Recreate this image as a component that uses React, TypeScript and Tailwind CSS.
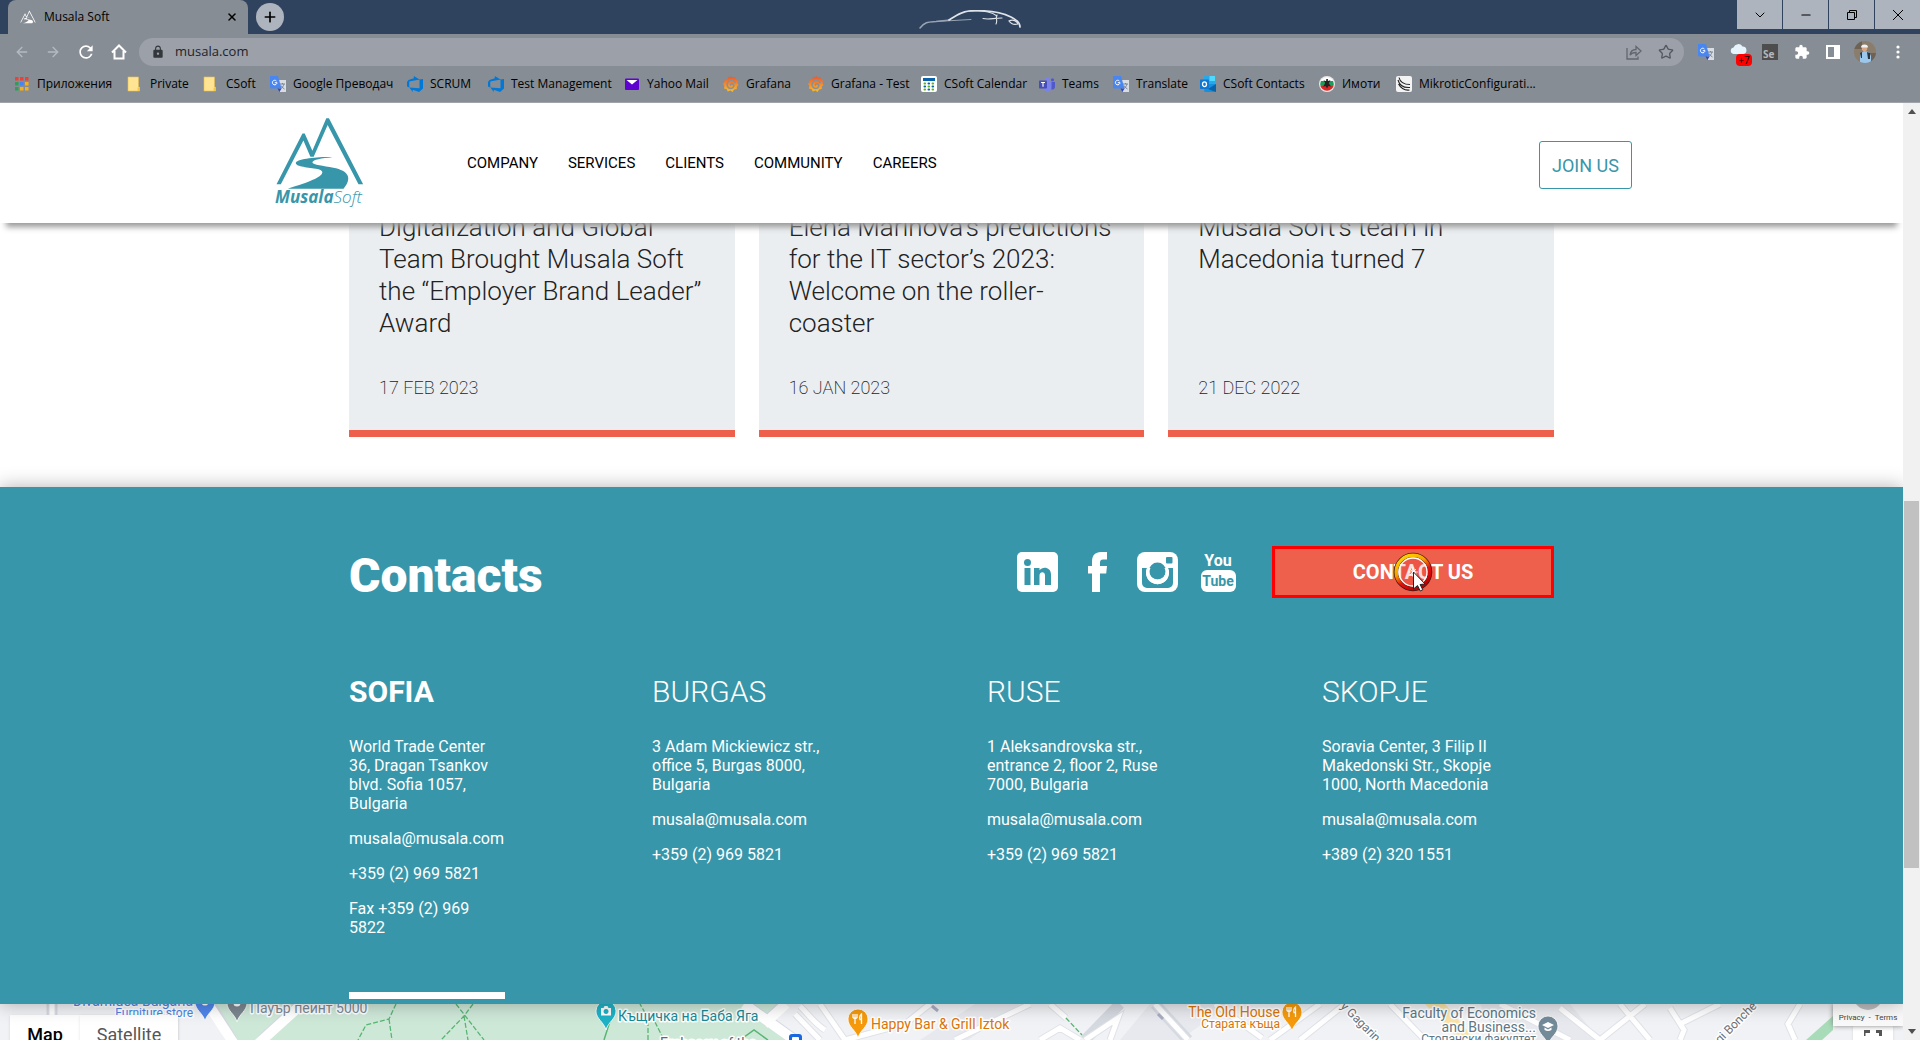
import React from "react";
import { MdRefresh, MdExtension, MdLock } from "react-icons/md";
import { ArrowLeft, ArrowRight, Plus, X, ChevronDown, Minus, Star } from "lucide-react";

/* ---------- small drawings ---------- */

function MountainMark({ className }: { className: string }) {
  return (
    <svg viewBox="30 20 270 217" className={className} fill="currentColor" aria-hidden="true">
      <path d="M34 223 L112 70 L119 70 L142 122 L184 24 L192 24 L295 223 L281 223 L188 44 L146 140 L136 140 L115 91 L47 223 Z" />
      <path d="M202 141 C160 139 92 147 92 159 C93 171 130 172 158 177 C186 184 170 201 130 215 C103 225 84 230 68 236 L236 236 C262 205 253 182 205 173 C176 167 143 164 142 157 C143 148 170 144 202 141 Z" />
    </svg>
  );
}

function AppsIcon() {
  const colors = ["#ee4035", "#ee4035", "#ee4035", "#2f9e58", "#4285f4", "#f9b015", "#2f9e58", "#f9b015", "#f9b015"];
  return (
    <svg viewBox="0 0 16 16" className="size-4 shrink-0" aria-hidden="true">
      {colors.map((c, i) => (
        <rect key={i} x={1 + (i % 3) * 5} y={1 + Math.floor(i / 3) * 5} width="3.500" height="3.500" fill={c} />
      ))}
    </svg>
  );
}

function FolderIcon() {
  return (
    <svg viewBox="0 0 16 16" className="size-4 shrink-0" aria-hidden="true">
      <path d="M1 1h10.5v10h1v4H1z" fill="#ffe493" stroke="#eac04a" strokeWidth=".6" />
      <path d="M10.500 11.500h2V15h-2z" fill="#f4c84a" />
    </svg>
  );
}

function TranslateIcon() {
  return (
    <svg viewBox="0 0 16 16" className="size-4 shrink-0" aria-hidden="true">
      <path d="M7 4h9v12H10z" fill="#d9dce1" />
      <path d="M10 8h5M12.500 7v1M14 8c-.5 2-2 4-3.500 5M11 9.500c.8 1.500 2 2.700 3.500 3.500" stroke="#6c7f95" fill="none" strokeWidth=".9" />
      <path d="M0 0h8l3.500 12.500H1a1 1 0 0 1-1-1z" fill="#4a86f0" />
      <path d="M7.500 12.500h4L9.500 16z" fill="#3346b8" />
      <path d="M6.400 5A2.300 2.300 0 1 0 7 6.700H4.800" stroke="#fff" fill="none" strokeWidth="1" />
    </svg>
  );
}

function DevOpsIcon() {
  return (
    <svg viewBox="0 0 16 16" className="size-4 shrink-0" aria-hidden="true">
      <path d="M16 3v9.500L12 16l-6.200-2.300V16l-3.500-4.600 10.200.8V3.500zM12.600 3.500L6.800 0v2.300L1.500 3.900 0 5.900v4.500l2.300 1V5.600z" fill="#0078d7" />
    </svg>
  );
}

function YahooMailIcon() {
  return (
    <svg viewBox="0 0 16 16" className="size-4 shrink-0" aria-hidden="true">
      <rect x="1" y="2.500" width="14" height="11.500" rx="1" fill="#5f01d1" />
      <path d="M2.500 4h11L8 8.500z" fill="#fff" />
    </svg>
  );
}

function GrafanaIcon() {
  return (
    <svg viewBox="0 0 16 16" className="size-4 shrink-0" aria-hidden="true">
      <defs>
        <linearGradient id="grafana" x1="0" y1="0" x2="0" y2="1">
          <stop offset="0" stopColor="#f0532b" />
          <stop offset="1" stopColor="#fbc02a" />
        </linearGradient>
      </defs>
      <path d="M8 0l1.700 1.600 2.600-.5.6 2.300 2.300 1.300-.7 2.300 1 2-1.600 1.600-.2 2.500-2.600.5L9.500 16l-2-1.400-2.800.9-1-2.300L1 12.500l.4-2.700L0 8l1.600-1.900L1.500 3.500l2.700-.4L5.500.8l2 .5z" fill="url(#grafana)" />
      <path d="M12.500 7.300C11.500 4.200 7.500 3.400 5.200 5.700 3 8.200 4.300 12.300 8 12.400c3 0 3.700-3.800 1.300-4.600-1.500-.4-2.300 1-1.500 1.800" fill="none" stroke="#8a9098" strokeWidth="1.500" />
    </svg>
  );
}

function CalendarIcon() {
  return (
    <svg viewBox="0 0 16 16" className="size-4 shrink-0" aria-hidden="true">
      <rect width="16" height="16" rx="2" fill="#fff" />
      <rect x="2" y="2" width="12" height="3" fill="#0b62a8" />
      {[0, 1, 2].map((r) =>
        [0, 1, 2].map((c) => (
          <rect key={`${r}${c}`} x={2.500 + c * 4} y={6.500 + r * 3} width="2.600" height="2" rx="1" fill={(r + c) % 2 ? "#0b62a8" : "#5cb51a"} />
        )),
      )}
    </svg>
  );
}

function TeamsIcon() {
  return (
    <svg viewBox="0 0 16 16" className="size-4 shrink-0" aria-hidden="true">
      <circle cx="9" cy="3" r="2.300" fill="#7b83eb" />
      <circle cx="13.500" cy="3.800" r="1.600" fill="#5059c9" />
      <path d="M11 6h5v5a2.500 2.500 0 0 1-4 2z" fill="#5059c9" />
      <path d="M5 6h7.500v5.500a4 4 0 0 1-7.500 2z" fill="#7b83eb" />
      <rect y="4.500" width="8" height="8" rx=".8" fill="#464eb8" />
      <path d="M2 6.500h4M4 6.500v4.300" stroke="#fff" strokeWidth="1.100" />
    </svg>
  );
}

function OutlookIcon() {
  return (
    <svg viewBox="0 0 16 16" className="size-4 shrink-0" aria-hidden="true">
      <rect x="4" y="0" width="11" height="9" fill="#28a8ea" />
      <rect x="9.500" y="0" width="5.500" height="5" fill="#50d9ff" />
      <path d="M3.500 8L16 8v7a1 1 0 0 1-1 1H4.500z" fill="#1490df" />
      <path d="M16 8l-8 5 8 3z" fill="#0a63a8" />
      <rect y="3.500" width="9" height="9.500" rx=".8" fill="#0f78d4" />
      <ellipse cx="4.500" cy="8.200" rx="2" ry="2.400" fill="none" stroke="#fff" strokeWidth="1.300" />
    </svg>
  );
}

function EstateIcon() {
  return (
    <svg viewBox="0 0 16 16" className="size-4 shrink-0" aria-hidden="true">
      <clipPath id="disc"><circle cx="8" cy="8" r="6.800" /></clipPath>
      <circle cx="8" cy="8" r="8" fill="#e9e9e9" />
      <g clipPath="url(#disc)">
        <rect width="16" height="6" fill="#fff" />
        <rect y="5" width="16" height="5" fill="#1c9c5b" />
        <rect y="10" width="16" height="6" fill="#dd2525" />
      </g>
      <path d="M7.300 3h1.600v2l2.600-.8-1.700 3 2.200 3.300-2.600-.5L8 12.500 6.600 10l-2.500.7L6.200 7 4.500 4.200l2.600 1z" fill="#222" />
    </svg>
  );
}

function MikrotikIcon() {
  return (
    <svg viewBox="0 0 16 16" className="size-4 shrink-0" aria-hidden="true">
      <rect width="16" height="16" rx="2" fill="#f3f3f3" />
      <path d="M3 1.500C4 6 8 8.500 14 8.500M2 4C3.500 9.500 8 12 14 11.500M2.500 8C5 12.500 9 14.500 13.500 14" fill="none" stroke="#222" strokeWidth="1.100" />
    </svg>
  );
}

function CarSketch() {
  return (
    <svg viewBox="0 0 104 20" className="h-5 w-[104px]" fill="none" stroke="#dfe4ea" strokeLinecap="round" aria-hidden="true">
      <path d="M1 18C6 11 11 12 17 11.500L31 10" strokeWidth="1.500" stroke="#98a3b3" />
      <path d="M17 11.500L52 9.500" strokeWidth="1" stroke="#98a3b3" />
      <path d="M30 10C38 5 43 1.500 50 1C66 0 82 2 92 7C99 10.500 101 13 101 17" strokeWidth="1.700" />
      <path d="M50 1C66 0 74 3 78 6M64 8.500C70 10 74 8 83 8M78 5C76 8 79 10 77 14" strokeWidth="1.100" />
      <path d="M90 11C94 9 98 11 99 14C95 15 92 14 90 11Z" strokeWidth="1.200" />
    </svg>
  );
}

/* ---------- browser chrome ---------- */

const bookmarks: { label: string; icon: () => React.JSX.Element }[] = [
  { label: "Приложения", icon: AppsIcon },
  { label: "Private", icon: FolderIcon },
  { label: "CSoft", icon: FolderIcon },
  { label: "Google Преводач", icon: TranslateIcon },
  { label: "SCRUM", icon: DevOpsIcon },
  { label: "Test Management", icon: DevOpsIcon },
  { label: "Yahoo Mail", icon: YahooMailIcon },
  { label: "Grafana", icon: GrafanaIcon },
  { label: "Grafana - Test", icon: GrafanaIcon },
  { label: "CSoft Calendar", icon: CalendarIcon },
  { label: "Teams", icon: TeamsIcon },
  { label: "Translate", icon: TranslateIcon },
  { label: "CSoft Contacts", icon: OutlookIcon },
  { label: "Имоти", icon: EstateIcon },
  { label: "MikroticConfigurati...", icon: MikrotikIcon },
];

function TabStrip() {
  return (
    <div className="flex h-[34px] items-stretch bg-[#2f435e]">
      <div className="ml-2 flex w-60 items-center rounded-t-lg bg-[#868d95] pr-2.5 pl-3">
        <MountainMark className="h-3.5 w-4 text-white" />
        <span className="ml-2 flex-1 text-[12px] text-black">Musala Soft</span>
        <button aria-label="Close tab"><X className="size-3 text-black" strokeWidth={3} /></button>
      </div>
      <button aria-label="New tab" className="ml-2 flex size-7 items-center justify-center self-center rounded-full bg-[#adb4be]">
        <Plus className="size-4 text-black" strokeWidth={2.500} />
      </button>
      <div className="flex flex-1 justify-center pt-2.5 pr-[78px]"><CarSketch /></div>
      <div className="ml-auto grid h-[29px] grid-cols-4 gap-px pl-px text-black">
        <button aria-label="Search tabs" className="flex w-[45px] items-center justify-center bg-[#adb4be]"><ChevronDown className="size-4" strokeWidth={1.500} /></button>
        <button aria-label="Minimise" className="flex w-[45px] items-center justify-center bg-[#adb4be]"><Minus className="size-3.5" strokeWidth={2} /></button>
        <button aria-label="Restore" className="flex w-[45px] items-center justify-center bg-[#adb4be]">
          <svg viewBox="0 0 10 10" className="size-2.5" fill="none" stroke="currentColor"><path d="M.5 2.500h7v7h-7zM2.500 2.500v-2h7v7h-2" /></svg>
        </button>
        <button aria-label="Close" className="flex w-[45px] items-center justify-center bg-[#adb4be]">
          <svg viewBox="0 0 10 10" className="size-2.5" fill="none" stroke="currentColor"><path d="M0 0l10 10M10 0L0 10" /></svg>
        </button>
      </div>
    </div>
  );
}

function Toolbar() {
  return (
    <div className="flex h-9 items-center bg-[#868d95] pl-3.5">
      <div className="flex items-center gap-[15px] text-white">
        <button aria-label="Back"><ArrowLeft className="size-4 text-[#b5bac0]" /></button>
        <button aria-label="Forward"><ArrowRight className="size-4 text-[#b5bac0]" /></button>
        <button aria-label="Reload"><MdRefresh className="size-5" /></button>
        <button aria-label="Home">
          <svg viewBox="0 0 16 16" className="size-4" fill="none" stroke="currentColor" strokeWidth="2"><path d="M1 8.500L8 1.500l7 7M3.500 7v7.500h9V7" /></svg>
        </button>
      </div>
      <div className="ml-3 flex h-7 flex-1 items-center rounded-full bg-[#9ca0a9] pr-2.5 pl-3">
        <MdLock className="size-3.5 text-[#33373c]" />
        <input aria-label="Address" defaultValue="musala.com" className="ml-2.5 min-w-0 flex-1 bg-transparent text-[13px] text-[#202428] outline-none" />
        <button aria-label="Share">
          <svg viewBox="0 0 16 16" className="size-4" fill="none" stroke="#62666c" strokeWidth="1.300"><path d="M1 4v11h11v-2.500M4 11c.5-3.500 2.500-5.500 6-5.500V2.500L15 7l-5 4.500V8.500C7 8.500 5.500 9 4 11z" /></svg>
        </button>
        <button aria-label="Bookmark" className="ml-4"><Star className="size-4 text-[#55595f]" strokeWidth={2} /></button>
      </div>
      <div className="flex w-[236px] shrink-0 items-center pl-3.5">
        <button aria-label="Translate"><TranslateIcon /></button>
        <button aria-label="Weather" className="relative ml-4">
          <svg viewBox="0 0 20 16" className="h-4 w-5"><path d="M3.500 10a3.300 3.300 0 0 1 0-6.500 5 5 0 0 1 9-1 3.800 3.800 0 0 1 1 7.500z" fill="#e6f4fc" /></svg>
          <span className="absolute top-2.5 left-1.5 h-3 w-4 rounded-sm bg-[#ff0000] text-[10px] leading-3 text-black">+7</span>
        </button>
        <button aria-label="Selenium" className="ml-3 flex size-4 items-end bg-[#4d4d4d] pl-px text-[10px] leading-3 font-bold text-[#b4b8bc]">Se</button>
        <button aria-label="Extensions" className="ml-4"><MdExtension className="size-4 text-white" /></button>
        <button aria-label="Side panel" className="ml-4">
          <svg viewBox="0 0 14 14" className="size-3.5"><path d="M0 0h14v14H0zM2 2v10h6V2z" fill="#fff" fillRule="evenodd" /></svg>
        </button>
        <button aria-label="Profile" className="ml-3.5">
          <svg viewBox="0 0 22 22" className="size-[22px]">
            <clipPath id="face"><circle cx="11" cy="11" r="11" /></clipPath>
            <g clipPath="url(#face)">
              <rect width="22" height="22" fill="#8b7d6b" />
              <path d="M0 0h8v8H0zM15 12h7v10h-7z" fill="#6d6254" />
              <path d="M6 22V13l4-3 5 1 2 4v7z" fill="#9bc7ec" />
              <path d="M13 11l3 1v6h-2zM6 12l2-1v6H7z" fill="#2c3440" />
              <circle cx="10.500" cy="7.500" r="2.700" fill="#d9a585" />
              <path d="M7 6.500a3.500 3 0 0 1 7 0z" fill="#f0f3f5" />
            </g>
          </svg>
        </button>
        <button aria-label="Menu" className="ml-5">
          <svg viewBox="0 0 4 14" className="h-3.5 w-1" fill="#fff"><circle cx="2" cy="2" r="1.600" /><circle cx="2" cy="7" r="1.600" /><circle cx="2" cy="12" r="1.600" /></svg>
        </button>
      </div>
    </div>
  );
}

function BookmarksBar() {
  return (
    <nav aria-label="Bookmarks" className="grid h-[33px] grid-cols-[113px_76px_67px_137px_81px_136px_99px_85px_113px_118px_74px_87px_119px_77px_auto] items-center border-b border-[#a0a4aa] bg-[#868d95] pb-1 pl-3.5 text-[12px] text-black">
      {bookmarks.map(({ label, icon: Icon }) => (
        <a key={label} href="#" className="flex items-center gap-[7px] whitespace-nowrap">
          <Icon />
          {label}
        </a>
      ))}
    </nav>
  );
}

/* ---------- page ---------- */

function SiteHeader() {
  return (
    <header className="relative z-10 h-[120px] shrink-0 bg-white shadow-[0_10px_6px_-6px_#999]">
      <div className="mx-auto flex h-full w-[1361px] max-w-full items-center pl-1">
        <a href="#" className="flex flex-col pb-1 text-[#3896aa]" aria-label="MusalaSoft">
          <MountainMark className="h-[72px] w-[90px]" />
          <span className="font-['Open_Sans'] text-[17px] leading-4 italic"><b>Musala</b><span className="font-light">Soft</span></span>
        </a>
        <nav aria-label="Main" className="ml-[102px] flex gap-[30px] text-[15px] text-black">
          <a href="#">COMPANY</a>
          <a href="#">SERVICES</a>
          <a href="#">CLIENTS</a>
          <a href="#">COMMUNITY</a>
          <a href="#">CAREERS</a>
        </nav>
        <button className="mt-1 ml-auto h-12 w-[93px] rounded-[3px] border border-[#3896aa] text-[18px] text-[#3896aa]">JOIN US</button>
      </div>
    </header>
  );
}

const news = [
  { lines: ["Digitalization and Global", "Team Brought Musala Soft", "the “Employer Brand Leader”", "Award"], date: "17 FEB 2023" },
  { lines: ["Elena Marinova’s predictions", "for the IT sector’s 2023:", "Welcome on the roller-", "coaster"], date: "16 JAN 2023" },
  { lines: ["Musala Soft’s team in", "Macedonia turned 7"], date: "21 DEC 2022" },
];

function News() {
  return (
    <section className="shrink-0 bg-white pb-[50px]">
      <div className="mx-auto grid w-[1205px] max-w-full grid-cols-3 gap-6">
        {news.map((n) => (
          <article key={n.date} className="border-b-[7px] border-[#ee5f4c] bg-[#ebeef1] px-[30px] pb-[30px]">
            <h3 className="-mt-3 min-h-32 text-[26px] leading-8 font-light whitespace-nowrap text-[#222]">
              {n.lines.map((l) => (
                <span key={l} className="block">{l}</span>
              ))}
            </h3>
            <p className="mt-[37px] text-[18px] leading-6 font-extralight text-[#222]">{n.date}</p>
          </article>
        ))}
      </div>
    </section>
  );
}

function Socials() {
  return (
    <div className="flex items-center gap-[18px] text-white">
      <a href="#" aria-label="LinkedIn">
        <svg viewBox="0 0 42 42" className="size-[42px]">
          <rect y="1" width="41" height="40" rx="5" fill="currentColor" />
          <g fill="#3896aa">
            <circle cx="10.500" cy="11.500" r="3.500" />
            <rect x="7.500" y="17" width="6" height="17" />
            <path d="M17 17h5.500v2.300c3-4.300 11.500-3.500 11.500 4.200V34h-6v-9.500c0-4.500-5.500-4-5.500 0V34H17z" />
          </g>
        </svg>
      </a>
      <a href="#" aria-label="Facebook">
        <svg viewBox="0 0 42 42" className="size-[42px]">
          <path d="M30 1v7.500h-4c-2 0-3 1-3 3V15h7l-.8 7.500H23V41h-8V22.500h-4V15h4v-4.500C15 4.500 18 1 24 1z" fill="currentColor" />
        </svg>
      </a>
      <a href="#" aria-label="Instagram">
        <svg viewBox="0 0 42 42" className="size-[42px]">
          <rect y="1" width="41" height="40" rx="8" fill="currentColor" />
          <rect x="29" y="6" width="6.500" height="6.500" rx="1" fill="#3896aa" />
          <path d="M5 17h5a11.500 11.500 0 1 0 21 0h5v15a5 5 0 0 1-5 5H10a5 5 0 0 1-5-5z" fill="#3896aa" />
          <circle cx="20.500" cy="20" r="8.500" fill="#3896aa" />
          <path d="M10 17a11.500 11.500 0 1 0 21 0l-3.500 0a8 8 0 1 1-14 0z" fill="currentColor" />
        </svg>
      </a>
      <a href="#" aria-label="YouTube" className="flex w-[42px] flex-col items-center font-bold">
        <span className="text-[16px] leading-[18px]">You</span>
        <span className="w-[35px] rounded-md bg-white text-center text-[14px] leading-[22px] text-[#3896aa]">Tube</span>
      </a>
    </div>
  );
}

function ClickMarker() {
  return (
    <svg viewBox="0 0 40 46" className="pointer-events-none absolute top-1/2 left-1/2 -mt-5 h-[46px] w-10 -translate-x-1/2" aria-hidden="true">
      <defs>
        <linearGradient id="ring" x1="0" y1="0" x2=".6" y2="1">
          <stop offset="0" stopColor="#ffe100" />
          <stop offset=".45" stopColor="#f8a000" />
          <stop offset=".7" stopColor="#e01010" />
          <stop offset="1" stopColor="#c00000" />
        </linearGradient>
      </defs>
      <circle cx="20" cy="20" r="17" fill="none" stroke="#3a1a10" strokeWidth="4.500" />
      <circle cx="20" cy="20" r="16.800" fill="none" stroke="url(#ring)" strokeWidth="3.500" />
      <circle cx="20" cy="20" r="14" fill="#e82020" fillOpacity=".15" stroke="#fff" strokeWidth="1.300" />
      <path d="M20 15v10M15 20h10M17 17l6 6M23 17l-6 6" stroke="#fff" strokeWidth=".8" />
      <path d="M20.500 20v17l4-3.500 2.700 5.500 2.600-1.300-2.700-5.200 5-.5z" fill="#fff" stroke="#222" strokeWidth="1" />
    </svg>
  );
}

type Office = { city: string; width: string; active?: boolean; blocks: string[][] };

const offices: Office[] = [
  { city: "SOFIA", width: "w-[303px]", active: true, blocks: [["World Trade Center", "36, Dragan Tsankov", "blvd. Sofia 1057,", "Bulgaria"], ["musala@musala.com"], ["+359 (2) 969 5821"], ["Fax +359 (2) 969", "5822"]] },
  { city: "BURGAS", width: "w-[335px]", blocks: [["3 Adam Mickiewicz str.,", "office 5, Burgas 8000,", "Bulgaria"], ["musala@musala.com"], ["+359 (2) 969 5821"]] },
  { city: "RUSE", width: "w-[335px]", blocks: [["1 Aleksandrovska str.,", "entrance 2, floor 2, Ruse", "7000, Bulgaria"], ["musala@musala.com"], ["+359 (2) 969 5821"]] },
  { city: "SKOPJE", width: "flex-1", blocks: [["Soravia Center, 3 Filip II", "Makedonski Str., Skopje", "1000, North Macedonia"], ["musala@musala.com"], ["+389 (2) 320 1551"]] },
];

function Contacts() {
  return (
    <section className="relative z-10 shrink-0 bg-[#3896aa] pt-[59px] pb-[5px] text-white shadow-[0_0_18px_rgba(0,0,0,0.3)]">
      <div className="mx-auto w-[1205px] max-w-full">
        <div className="flex items-start">
          <h2 className="text-[48px] leading-[60px] font-black">Contacts</h2>
          <div className="ml-auto flex h-[52px] items-center gap-[33px]">
            <Socials />
            <button className="relative h-[52px] w-[282px] border-[3px] border-[#ff0000] bg-[#ee5f4c] text-[20px] font-bold">
              CONTACT US
              <ClickMarker />
            </button>
          </div>
        </div>
        <div className="mt-[66px] flex">
          {offices.map((o) => (
            <div key={o.city} className={o.width}>
              <h3 className={o.active ? "text-[30px] leading-10 font-bold" : "text-[30px] leading-10 font-light"}>{o.city}</h3>
              <div className="mt-[25px] flex flex-col gap-4 text-[16px] leading-[19px]">
                {o.blocks.map((b) => (
                  <p key={b[0]}>
                    {b.map((l) => (
                      <span key={l} className="block">{l}</span>
                    ))}
                  </p>
                ))}
              </div>
              {o.active && <div className="mt-[55px] h-[7px] w-[156px] bg-white" />}
            </div>
          ))}
        </div>
      </div>
    </section>
  );
}

function Pin({ x, y, color, kind }: { x: number; y: number; color: string; kind: "food" | "camera" | "cap" | "dot" }) {
  return (
    <g transform={`translate(${x} ${y})`}>
      <path d="M0 0C-2-8-10-11-10-19A10 10 0 0 1 10-19C10-11 2-8 0 0Z" fill={color} stroke="#fff" strokeWidth=".8" />
      {kind === "food" && <path d="M-3-24v4M-5-24v3.500q2 2 4 0V-24M-3-20v6M3.500-14v-10q-2.500 2-1.500 5.500h1.500" fill="none" stroke="#fff" strokeWidth="1.300" />}
      {kind === "camera" && <path fillRule="evenodd" d="M-5-22h2.500l1-2h3l1 2H5v7.500H-5zM0-21a2.500 2.500 0 1 0 .1 0z" fill="#fff" />}
      {kind === "cap" && <path d="M-6-20L0-23l6 3-6 3zM-3.500-17.500v2.500q3.500 2 7 0v-2.500L0-15.500z" fill="#fff" />}
      {kind === "dot" && <circle cy="-19" r="3.500" fill="#fff" />}
    </g>
  );
}

function StreetMap() {
  return (
    <section aria-label="Office map" className="relative min-h-0 flex-1 overflow-hidden bg-[#f1f2f5]">
      <svg viewBox="0 0 1903 36" preserveAspectRatio="xMidYMin slice" className="block h-full w-full font-['Roboto',sans-serif]">
        <path d="M195 0H787L762 17L742 0H738L790 36H195Z" fill="#cee8d8" />
        <path d="M738 0H787L762 20Z" fill="#cee8d8" />
        <g fill="#e7e9ee">
          <path d="M920 36L975 0H1020L968 36ZM1480 0H1570L1600 36H1500ZM1180 36L1230 0H1150L1120 36Z" />
        </g>
        <path d="M1425 0L1460 36H1475L1445 0Z" fill="#fbe3a8" />
        <path d="M1806 36L1833 12V26L1822 36Z" fill="#a8dbb8" />
        <path d="M180 0H208L232 36H180Z" fill="#f1f2f5" />
        <g fill="none" stroke="#d5d9e0" strokeWidth="11">
          <path d="M210 0L232 36M300 0L262 36M745 0L795 36M785 0L765 18M52 0V14M1085 36L1120 0M1155 0L1188 36" />
        </g>
        <g fill="none" stroke="#fff" strokeWidth="10">
          <path d="M208 0L234 40M302 0L258 40M744 0L800 40M786 0L764 20" />
        </g>
        <g fill="none" stroke="#dfe2e8" strokeWidth="7">
          <path d="M52 0V14M820 0L845 36L905 20L930 0M795 10L820 36M800 2C810 12 815 20 825 26M955 36L1030 0M1040 36L1060 24L1080 36M1085 36L1118 14L1110 36M1050 0L1066 14M1155 0L1188 36M1215 0L1262 34M1390 0L1425 36M1345 0L1300 36M1560 4L1600 36L1645 0M1620 0L1650 36M1680 20L1720 0M1670 4L1684 26L1680 36M1800 0L1788 20L1795 36M1270 36L1320 0M1500 0L1570 36" />
        </g>
        <g fill="none" stroke="#fff" strokeWidth="5">
          <path d="M52 0V14M820 0L845 36L905 20L930 0M795 10L820 36M800 2C810 12 815 20 825 26M955 36L1030 0M1040 36L1060 24L1080 36M1085 36L1118 14L1110 36M1050 0L1066 14M1155 0L1188 36M1215 0L1262 34M1390 0L1425 36M1345 0L1300 36M1560 4L1600 36L1645 0M1620 0L1650 36M1680 20L1720 0M1670 4L1684 26L1680 36M1800 0L1788 20L1795 36M1270 36L1320 0M1500 0L1570 36" />
        </g>
        <g fill="none" stroke="#58b573" strokeWidth="1.300" strokeDasharray="5 2">
          <path d="M396 0L389 15L366 21L358 36M389 15L392 36M456 0L484 36M473 0L464 12L441 36M464 12L468 36M648 36V14L640 0M655 18L664 36M1066 14L1082 31" />
        </g>
        <path d="M604 36L611 14M740 36L754 26L768 36" fill="none" stroke="#58b573" strokeWidth="1.500" />
        <path d="M932 2l6 5M1158 10l5 5" stroke="#a9adc4" strokeWidth="3" />
        <Pin x={205} y={17} color="#4f86ec" kind="dot" />
        <Pin x={237} y={18} color="#7b8790" kind="dot" />
        <Pin x={606} y={26} color="#1fb2c6" kind="camera" />
        <Pin x={858} y={34} color="#f69a0b" kind="food" />
        <Pin x={1292} y={27} color="#f69a0b" kind="food" />
        <Pin x={1548} y={41} color="#738a99" kind="cap" />
        <rect x="789" y="30" width="13" height="12" rx="3" fill="#1a68e0" />
        <rect x="792" y="33" width="7" height="5" rx="1" fill="#fff" />
        <g stroke="#fff" strokeWidth="3" strokeLinejoin="round" paintOrder="stroke">
          <g fontSize="14">
            <text x="193" y="2" textAnchor="end" fill="#4a84ea">Divamidea Bulgaria</text>
            <text x="250" y="9" fill="#7c8a96">Пауър пейнт 5000</text>
            <text x="618" y="17" fill="#168a96">Къщичка на Баба Яга</text>
            <text x="871" y="25" fill="#d9750a">Happy Bar &amp; Grill Iztok</text>
            <text x="660" y="44" fill="#5b6a75">Embassy of the</text>
            <text x="1280" y="13" textAnchor="end" fill="#d9750a">The Old House</text>
            <text x="1536" y="14" textAnchor="end" fill="#5d7787">Faculty of Economics</text>
            <text x="1536" y="28" textAnchor="end" fill="#5d7787">and Business...</text>
          </g>
          <g fontSize="12">
            <text x="193" y="13" textAnchor="end" fill="#4a84ea">Furniture store</text>
            <text x="1280" y="24" textAnchor="end" fill="#d9750a">Старата къща</text>
            <text x="1536" y="39" textAnchor="end" fill="#5d7787">Стопански факултет</text>
            <text transform="translate(1340 3) rotate(45)" fill="#6b7177">y Gagarin</text>
            <text transform="translate(1720 40) rotate(-45)" fill="#6b7177">gi Bonche</text>
          </g>
        </g>
      </svg>
      <div className="absolute top-[11px] left-2.5 flex h-10 bg-white text-[18px] leading-9 shadow">
        <button className="w-[70px] font-medium text-black">Map</button>
        <button className="w-[98px] text-[#565656] shadow">Satellite</button>
      </div>
      <button aria-label="Full screen" className="absolute top-5 right-2.5 flex h-10 w-10 justify-center bg-white pt-1.5 shadow">
        <svg viewBox="0 0 18 18" className="size-[18px]" fill="none" stroke="#555" strokeWidth="3"><path d="M0 6V1.500h6M12 1.500h4.500V6M16.500 12v4.500H12M6 16.500H1.500V12" /></svg>
      </button>
      <div className="absolute top-0 right-0 flex h-[22px] w-[70px] items-end justify-center overflow-hidden bg-[#f9f9f9] pb-0.5 text-[8px] leading-3 text-[#444] shadow-[0_0_5px_gray]">
        <span className="absolute -top-6 left-5 size-[30px] rounded-full bg-[#b9bbbe]" />
        <span className="relative flex gap-1">
          <a href="#">Privacy</a>-<a href="#">Terms</a>
        </span>
      </div>
    </section>
  );
}

function Scrollbar() {
  return (
    <div className="flex w-[17px] shrink-0 flex-col items-center bg-[#f1f1f1] py-1.5" aria-hidden="true">
      <svg viewBox="0 0 8 5" className="h-[5px] w-2" fill="#505050"><path d="M0 5L4 0l4 5z" /></svg>
      <div className="flex-[387]" />
      <div className="w-[15px] flex-[367] bg-[#c1c1c1]" />
      <div className="flex-[161]" />
      <svg viewBox="0 0 8 5" className="h-[5px] w-2" fill="#505050"><path d="M0 0l4 5 4-5z" /></svg>
    </div>
  );
}

export default function App() {
  return (
    <div className="flex h-screen flex-col overflow-hidden bg-white">
      <div className="font-['Open_Sans','Noto_Sans',sans-serif]">
        <TabStrip />
        <Toolbar />
        <BookmarksBar />
      </div>
      <div className="flex min-h-0 flex-1">
        <main className="flex min-w-0 flex-1 flex-col overflow-hidden font-['Roboto',sans-serif]">
          <SiteHeader />
          <News />
          <Contacts />
          <StreetMap />
        </main>
        <Scrollbar />
      </div>
    </div>
  );
}
